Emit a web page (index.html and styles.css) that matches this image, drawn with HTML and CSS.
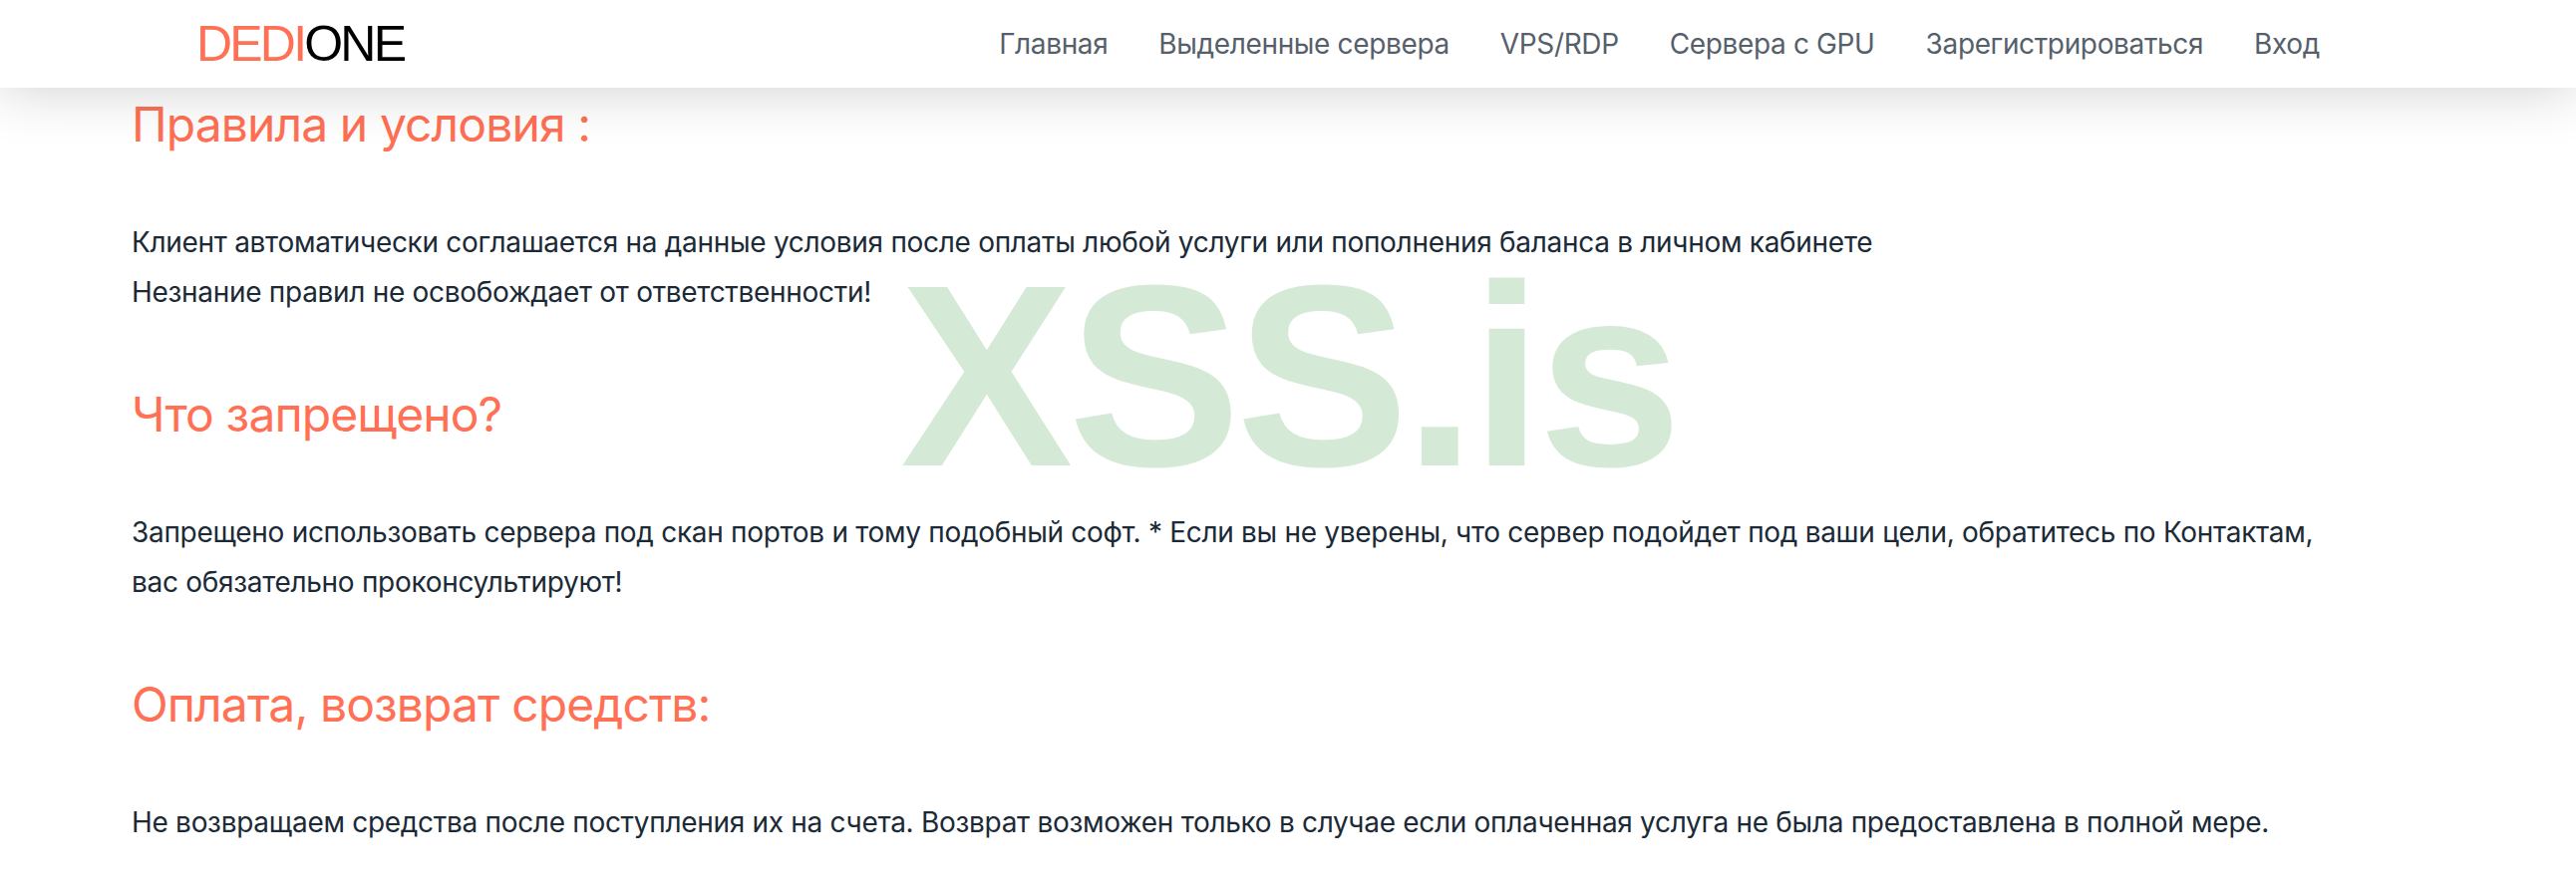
FILE: index.html
```html
<!DOCTYPE html>
<html lang="ru">
<head>
<meta charset="utf-8">
<title>DEDIONE</title>
<link rel="stylesheet" href="styles.css">
</head>
<body>
<header class="topbar">
  <a class="logo" href="#"><span class="logo-accent">DEDI</span>ONE</a>
  <nav class="nav">
    <a href="#">Главная</a>
    <a href="#">Выделенные сервера</a>
    <a href="#">VPS/RDP</a>
    <a href="#">Сервера с GPU</a>
    <a href="#">Зарегистрироваться</a>
    <a href="#">Вход</a>
  </nav>
</header>
<main class="content">
  <h2>Правила и условия :</h2>
  <p>Клиент автоматически соглашается на данные условия после оплаты любой услуги или пополнения баланса в личном кабинете<br>Незнание правил не освобождает от ответственности!</p>
  <h2>Что запрещено?</h2>
  <p>Запрещено использовать сервера под скан портов и тому подобный софт. * Если вы не уверены, что сервер подойдет под ваши цели, обратитесь по Контактам, вас обязательно проконсультируют!</p>
  <h2>Оплата, возврат средств:</h2>
  <p>Не возвращаем средства после поступления их на счета. Возврат возможен только в случае если оплаченная услуга не была предоставлена в полной мере.</p>
</main>
<div class="watermark">XSS.is</div>
</body>
</html>
```
FILE: styles.css
```css
* { box-sizing: border-box; }
html, body { margin: 0; height: 100%; overflow: hidden; background: #fff; }
body { font-family: Inter, "Liberation Sans", sans-serif; color: #1b2a36; position: relative; }
a { text-decoration: none; }
.topbar {
  height: 88px;
  display: flex;
  align-items: center;
  justify-content: space-between;
  padding: 0 257px 0 197px;
  background: #fff;
  box-shadow: 0 0 60px rgba(0, 0, 0, 0.2);
  position: relative;
}
.logo { font-family: "Liberation Sans", sans-serif; font-size: 50px; letter-spacing: -2.8px; color: #000; line-height: 1; }
.logo-accent { color: #ff7054; }
.nav { display: flex; gap: 51px; }
.nav a { font-size: 28px; letter-spacing: -0.36px; color: #56606b; }
.content { padding: 0 250px 0 132px; }
h2 { font-size: 48px; letter-spacing: -0.9px; line-height: 58px; font-weight: 400; color: #ff7054; margin: 8px 0 64px; }
h2 + p { margin: 0 0 69px; }
p { font-size: 28px; letter-spacing: -0.3px; line-height: 50px; }
.watermark {
  position: absolute;
  left: 903px;
  top: 247px;
  font-family: "Liberation Sans", sans-serif;
  font-size: 260px;
  letter-spacing: -5px;
  line-height: 1;
  font-weight: 700;
  color: #d5ead6;
  white-space: nowrap;
}
```
